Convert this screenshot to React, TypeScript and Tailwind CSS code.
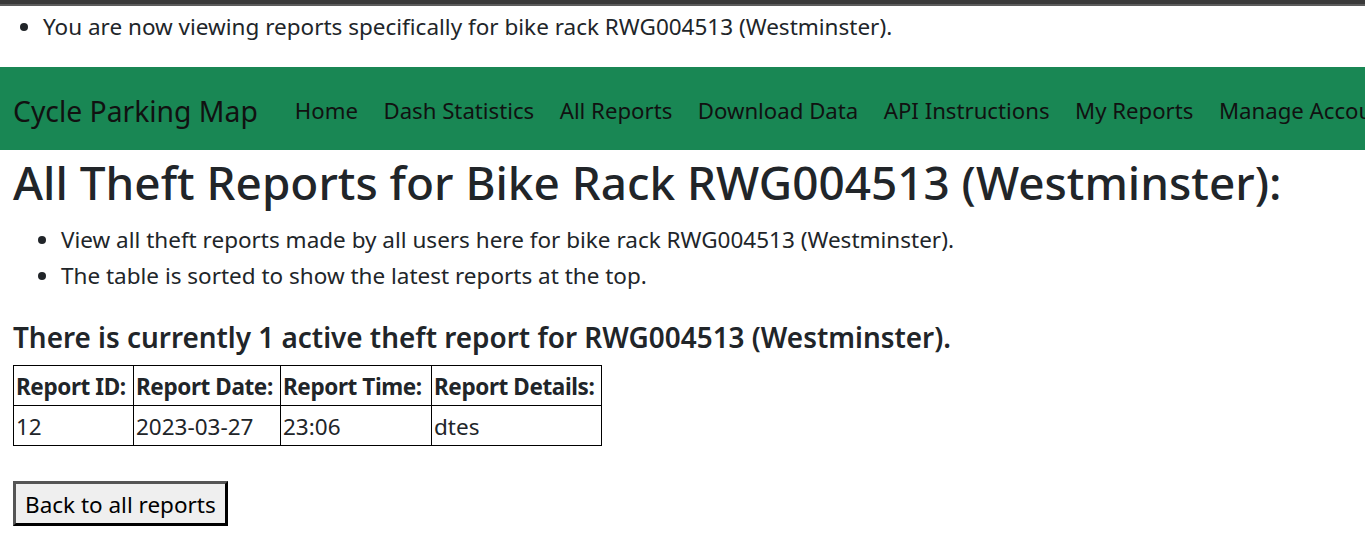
import React from "react";

const font = { fontFamily: '"Noto Sans", "Open Sans", sans-serif' };

export default function App() {
  const links = ["Home", "Dash Statistics", "All Reports", "Download Data", "API Instructions", "My Reports", "Manage Account"];
  return (
    <div className="w-[1365px] h-[541px] overflow-hidden bg-white text-[#212529]" style={font}>
      <div className="h-[4px] bg-[#3a3a3a]" />
      <div className="h-[2px] bg-[#5c5c5c]" />
      <ul className="list-disc pl-[43px] pt-[6px] h-[61px] text-[22.5px] leading-[30px] marker:text-[#212529]">
        <li>You are now viewing reports specifically for bike rack RWG004513 (Westminster).</li>
      </ul>
      <nav className="h-[83px] bg-[#198754] flex items-center pl-[13px] pt-[5px] whitespace-nowrap text-[#111] overflow-hidden">
        <span className="text-[28.3px] mr-[37px]">Cycle Parking Map</span>
        <div className="flex gap-[25.5px] text-[22.2px]">
          {links.map((l) => (
            <span key={l}>{l}</span>
          ))}
        </div>
      </nav>
      <div className="px-[13px]">
        <h1 className="text-[45.9px] font-medium leading-[64px] mt-[0px]">All Theft Reports for Bike Rack RWG004513 (Westminster):</h1>
        <ul className="list-disc pl-[48px] mt-[8px] text-[22.5px] leading-[36px]">
          <li>View all theft reports made by all users here for bike rack RWG004513 (Westminster).</li>
          <li>The table is sorted to show the latest reports at the top.</li>
        </ul>
        <h3 className="text-[27.9px] font-semibold leading-[40px] mt-[23px]">There is currently 1 active theft report for RWG004513 (Westminster).</h3>
        <table className="border-collapse mt-[8px] text-[22.5px] table-fixed">
          <thead>
            <tr className="h-[40px]">
              <th className="border border-black text-left font-bold px-[2px] pt-[3px] w-[120px] whitespace-nowrap tracking-[-0.4px]">Report ID:</th>
              <th className="border border-black text-left font-bold px-[2px] pt-[3px] w-[147px] whitespace-nowrap tracking-[-0.4px]">Report Date:</th>
              <th className="border border-black text-left font-bold px-[2px] pt-[3px] w-[151px] whitespace-nowrap tracking-[-0.4px]">Report Time:</th>
              <th className="border border-black text-left font-bold px-[2px] pt-[3px] w-[170px] whitespace-nowrap tracking-[-0.4px]">Report Details:</th>
            </tr>
          </thead>
          <tbody>
            <tr className="h-[40px]">
              <td className="border border-black px-[2px] pt-[3px]">12</td>
              <td className="border border-black px-[2px] pt-[3px]">2023-03-27</td>
              <td className="border border-black px-[2px] pt-[3px]">23:06</td>
              <td className="border border-black px-[2px] pt-[3px]">dtes</td>
            </tr>
          </tbody>
        </table>
        <button className="mt-[35px] h-[45px] px-[9px] pt-[3px] bg-[#efefef] text-[22.5px] text-black border-[3px] border-t-[#555] border-l-[#555] border-b-black border-r-black">
          Back to all reports
        </button>
      </div>
    </div>
  );
}
